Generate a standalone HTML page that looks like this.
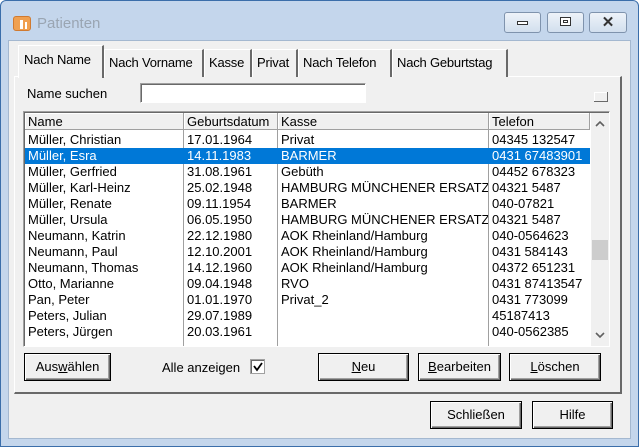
<!DOCTYPE html>
<html><head><meta charset="utf-8"><style>
*{box-sizing:border-box;margin:0;padding:0}
body{width:639px;height:447px;overflow:hidden;background:#fff;font-family:"Liberation Sans",sans-serif;font-size:13px;color:#000;position:relative}
.a{position:absolute}
.win{left:0;top:0;width:639px;height:447px;background:#c4d6ec;border:1px solid #3b6eaa;border-radius:6px 6px 0 0}
.client{left:8px;top:40px;width:623px;height:399px;background:#f0f0f0;border:1px solid #a4b8d0}
.tb{border:1px solid #7f93ad;border-radius:3px;background:linear-gradient(#eef3f9,#d2dfee);height:21px}
.tab{background:#f0f0f0;border-left:1px solid #fff;border-top:1px solid #fff;border-right:2px solid #696969;height:28px;padding:5px 0 0 4px;white-space:nowrap;letter-spacing:-0.2px}
.panel{left:14px;top:76px;width:608px;height:318px;border-left:1px solid #fff;border-top:1px solid #fff;border-right:2px solid #696969;border-bottom:2px solid #696969}
.btn{background:#f0f0f0;border:1px solid #000;box-shadow:inset 1px 1px #fff,inset -1px -1px #696969,inset -2px -2px #a0a0a0;text-align:center;line-height:26px}
.row{position:absolute;left:0;height:16px;width:565px;line-height:16px}
.row span{position:absolute;top:0;white-space:nowrap;overflow:hidden}
.c1{left:3px;width:155px}.c2{left:162px;width:90px}.c3{left:256px;width:207px}.c4{left:467px;width:100px}
.sel{background:#0078d7;color:#fff}
.hd{position:absolute;top:0;height:17px;background:#f0f0f0;border-right:1px solid #a0a0a0;border-bottom:1px solid #a0a0a0;box-shadow:inset 1px 1px #fff;padding-left:3px;line-height:17px}
.vl{position:absolute;top:17px;width:1px;height:216px;background:#a0a0a0}
u{text-decoration:underline}
</style></head><body>
<div class="a win"></div>
<div class="a" style="left:13px;top:16px;width:18px;height:15px;background:#f0a050;border-radius:3px;border:1px solid #d07a30"></div>
<div class="a" style="left:20px;top:20px;width:3px;height:9px;background:#fff"></div>
<div class="a" style="left:25px;top:22px;width:2px;height:7px;background:#fff"></div>
<div class="a" style="left:37px;top:15px;font-size:15px;color:#9aa5b2">Patienten</div>
<div class="a tb" style="left:504px;top:12px;width:37px"><div class="a" style="left:12px;top:8px;width:11px;height:4px;border:1px solid #333;background:#fff"></div></div>
<div class="a tb" style="left:547px;top:12px;width:37px"><div class="a" style="left:12px;top:4px;width:11px;height:9px;border:1px solid #333;background:#fff"><div class="a" style="left:2px;top:2px;width:5px;height:3px;border:1px solid #333"></div></div></div>
<div class="a tb" style="left:589px;top:12px;width:38px;font-size:15px;font-weight:bold;text-align:center;line-height:19px;color:#333">✕</div>
<div class="a client"></div>
<div class="a panel"></div>
<div class="a tab" style="left:104px;top:49px;width:100px">Nach Vorname</div>
<div class="a tab" style="left:204px;top:49px;width:48px">Kasse</div>
<div class="a tab" style="left:252px;top:49px;width:46px">Privat</div>
<div class="a tab" style="left:298px;top:49px;width:94px">Nach Telefon</div>
<div class="a tab" style="left:392px;top:49px;width:116px">Nach Geburtstag</div>
<div class="a tab" style="left:18px;top:45px;width:86px;height:33px;border-bottom:none;padding:6px 0 0 5px">Nach Name</div>
<div class="a" style="left:27px;top:86px">Name suchen</div>
<div class="a" style="left:140px;top:83px;width:226px;height:20px;background:#fff;border-top:1px solid #a0a0a0;border-left:1px solid #a0a0a0;border-bottom:1px solid #fff;border-right:1px solid #fff;box-shadow:inset 1px 1px #696969"></div>
<div class="a" style="left:594px;top:92px;width:14px;height:10px;border-right:1px solid #696969;border-bottom:1px solid #696969;box-shadow:inset 1px 1px #fff"></div>
<div class="a" style="left:23px;top:111px;width:587px;height:236px;background:#fff;border-top:1px solid #a0a0a0;border-left:1px solid #a0a0a0;border-bottom:1px solid #fff;border-right:1px solid #fff;box-shadow:inset 1px 1px #696969">
<div class="a" style="left:1px;top:1px;width:584px;height:233px;overflow:hidden">
<div class="hd" style="left:0;width:159px">Name</div>
<div class="hd" style="left:159px;width:94px">Geburtsdatum</div>
<div class="hd" style="left:253px;width:211px">Kasse</div>
<div class="hd" style="left:464px;width:101px">Telefon</div>
<div class="vl" style="left:158px"></div><div class="vl" style="left:252px"></div><div class="vl" style="left:463px"></div>
<div class="row" style="top:19px"><span class="c1">Müller, Christian</span><span class="c2">17.01.1964</span><span class="c3">Privat</span><span class="c4">04345 132547</span></div>
<div class="row sel" style="top:35px"><span class="c1">Müller, Esra</span><span class="c2">14.11.1983</span><span class="c3">BARMER</span><span class="c4">0431 67483901</span></div>
<div class="row" style="top:51px"><span class="c1">Müller, Gerfried</span><span class="c2">31.08.1961</span><span class="c3">Gebüth</span><span class="c4">04452 678323</span></div>
<div class="row" style="top:67px"><span class="c1">Müller, Karl-Heinz</span><span class="c2">25.02.1948</span><span class="c3">HAMBURG MÜNCHENER ERSATZ</span><span class="c4">04321 5487</span></div>
<div class="row" style="top:83px"><span class="c1">Müller, Renate</span><span class="c2">09.11.1954</span><span class="c3">BARMER</span><span class="c4">040-07821</span></div>
<div class="row" style="top:99px"><span class="c1">Müller, Ursula</span><span class="c2">06.05.1950</span><span class="c3">HAMBURG MÜNCHENER ERSATZ</span><span class="c4">04321 5487</span></div>
<div class="row" style="top:115px"><span class="c1">Neumann, Katrin</span><span class="c2">22.12.1980</span><span class="c3">AOK Rheinland/Hamburg</span><span class="c4">040-0564623</span></div>
<div class="row" style="top:131px"><span class="c1">Neumann, Paul</span><span class="c2">12.10.2001</span><span class="c3">AOK Rheinland/Hamburg</span><span class="c4">0431 584143</span></div>
<div class="row" style="top:147px"><span class="c1">Neumann, Thomas</span><span class="c2">14.12.1960</span><span class="c3">AOK Rheinland/Hamburg</span><span class="c4">04372 651231</span></div>
<div class="row" style="top:163px"><span class="c1">Otto, Marianne</span><span class="c2">09.04.1948</span><span class="c3">RVO</span><span class="c4">0431 87413547</span></div>
<div class="row" style="top:179px"><span class="c1">Pan, Peter</span><span class="c2">01.01.1970</span><span class="c3">Privat_2</span><span class="c4">0431 773099</span></div>
<div class="row" style="top:195px"><span class="c1">Peters, Julian</span><span class="c2">29.07.1989</span><span class="c3"></span><span class="c4">45187413</span></div>
<div class="row" style="top:211px"><span class="c1">Peters, Jürgen</span><span class="c2">20.03.1961</span><span class="c3"></span><span class="c4">040-0562385</span></div>
<div class="a" style="left:566px;top:0;width:18px;height:233px;background:#f0f0f0"></div>
<div class="a" style="left:567px;top:127px;width:16px;height:20px;background:#cdcdcd"></div>
<svg class="a" style="left:566px;top:6px" width="18" height="10"><path d="M5 7 L9 3 L13 7" fill="none" stroke="#606060" stroke-width="1.6"/></svg>
<svg class="a" style="left:566px;top:217px" width="18" height="10"><path d="M5 3 L9 7 L13 3" fill="none" stroke="#606060" stroke-width="1.6"/></svg>
</div></div>
<div class="a btn" style="left:24px;top:353px;width:87px;height:28px">Aus<u>w</u>ählen</div>
<div class="a" style="left:162px;top:360px">Alle anzeigen</div>
<div class="a" style="left:250px;top:359px;width:15px;height:15px;background:#fff;border:1px solid #a0a0a0;box-shadow:inset 1px 1px #696969"><svg class="a" style="left:1px;top:1px" width="12" height="12"><path d="M2 5 L5 9 L10 2" fill="none" stroke="#000" stroke-width="1.8"/></svg></div>
<div class="a btn" style="left:318px;top:353px;width:91px;height:28px"><u>N</u>eu</div>
<div class="a btn" style="left:418px;top:353px;width:83px;height:28px"><u>B</u>earbeiten</div>
<div class="a btn" style="left:509px;top:353px;width:92px;height:28px"><u>L</u>öschen</div>
<div class="a btn" style="left:430px;top:401px;width:92px;height:28px">Schließen</div>
<div class="a btn" style="left:532px;top:401px;width:81px;height:28px">Hilfe</div>
</body></html>
